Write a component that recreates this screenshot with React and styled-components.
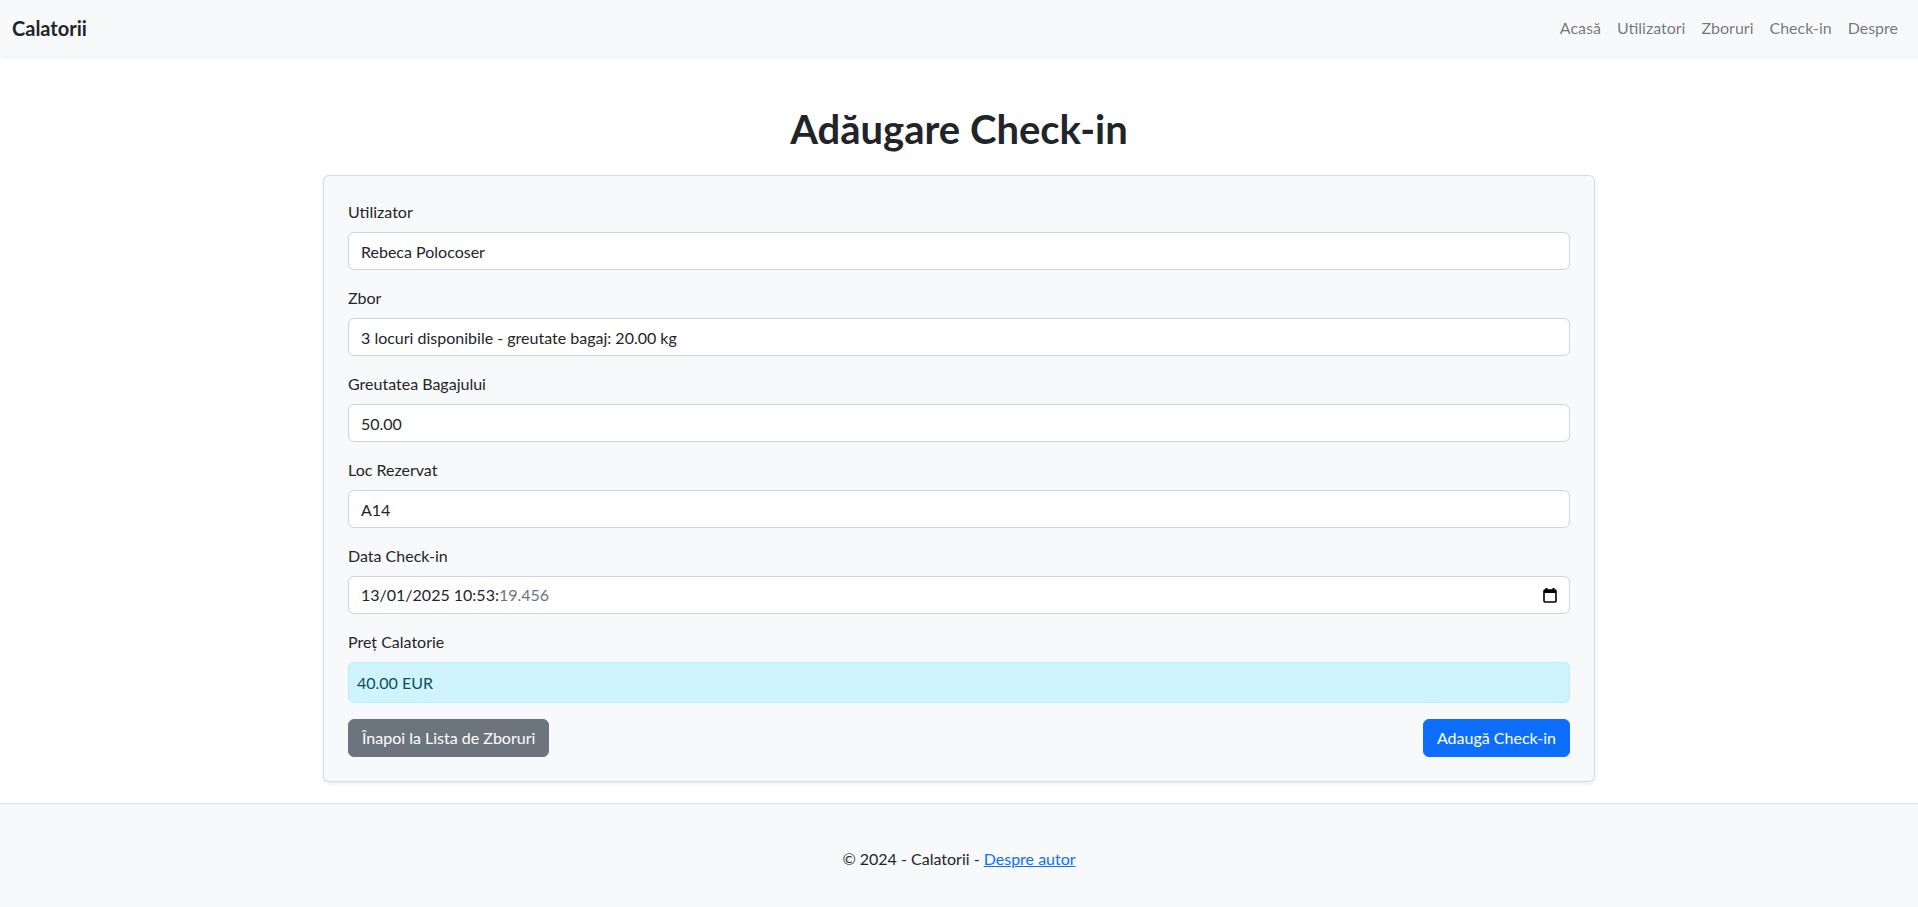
import styled, { createGlobalStyle } from 'styled-components';

const GlobalStyle = createGlobalStyle`
  * { box-sizing: border-box; }
  body {
    margin: 0;
    font-family: Lato, "Noto Sans", "Liberation Sans", sans-serif;
    font-size: 16px;
    line-height: 1.5;
    color: #212529;
    background: #fff;
  }
`;

const Page = styled.div`
  min-height: 100vh;
  display: flex;
  flex-direction: column;
`;

const Navbar = styled.nav`
  height: 56px;
  padding: 0 12px;
  display: flex;
  align-items: center;
  justify-content: space-between;
  background: #f8f9fa;
  box-shadow: 0 2px 4px rgba(0, 0, 0, 0.06);
  position: relative;
  z-index: 1;
`;

const Brand = styled.a`
  font-size: 20px;
  font-weight: 700;
  color: #212529;
  text-decoration: none;
`;

const NavList = styled.div`
  display: flex;
`;

const NavLink = styled.a`
  padding: 8px;
  color: rgba(0, 0, 0, 0.55);
  text-decoration: none;
`;

const Main = styled.main`
  flex: 1;
  padding: 49px 0 20px;
`;

const Title = styled.h1`
  margin: 0 0 22px;
  font-size: 40px;
  font-weight: 700;
  line-height: 1.2;
  text-align: center;
  color: #212529;
`;

const Card = styled.form`
  max-width: 1272px;
  margin: 0 auto;
  padding: 24px;
  background: #f8f9fa;
  border: 1px solid rgba(0, 0, 0, 0.12);
  border-radius: 6px;
  box-shadow: 0 2px 4px rgba(0, 0, 0, 0.075);
`;

const Group = styled.div`
  margin-bottom: 16px;
`;

const Label = styled.label`
  display: block;
  margin-bottom: 8px;
`;

const Input = styled.input`
  display: block;
  width: 100%;
  height: 38px;
  padding: 6px 12px;
  font: inherit;
  color: #212529;
  background: #fff;
  border: 1px solid #ced4da;
  border-radius: 6px;
  outline: none;
`;

const DateBox = styled.div`
  display: flex;
  align-items: center;
  justify-content: space-between;
  height: 38px;
  padding: 6px 12px;
  background: #fff;
  border: 1px solid #ced4da;
  border-radius: 6px;
`;

const Muted = styled.span`
  color: #6c757d;
`;

const InfoBox = styled.div`
  padding: 8px;
  line-height: 23px;
  color: #055160;
  background: #cff4fc;
  border: 1px solid #b6effb;
  border-radius: 6px;
`;

const Actions = styled.div`
  display: flex;
  justify-content: space-between;
`;

const Button = styled.button`
  height: 38px;
  padding: 6px 13px;
  font: inherit;
  color: #fff;
  background: ${p => (p.$primary ? '#0d6efd' : '#6c757d')};
  border: 1px solid ${p => (p.$primary ? '#0d6efd' : '#6c757d')};
  border-radius: 6px;
  cursor: pointer;
`;

const Footer = styled.footer`
  padding: 43px 0 36px;
  text-align: center;
  background: #f8f9fa;
  border-top: 1px solid #dee2e6;
`;

const FooterLink = styled.a`
  color: #0d6efd;
  text-decoration: underline;
`;

const CalendarIcon = () => (
  <svg width="14" height="15" viewBox="0 0 14 15">
    <rect x="2.5" y="0" width="2" height="3" fill="#000" />
    <rect x="9.5" y="0" width="2" height="3" fill="#000" />
    <rect x="1" y="2" width="12" height="12" rx="1" fill="none" stroke="#000" strokeWidth="1.6" />
    <rect x="1" y="2" width="12" height="3" fill="#000" />
  </svg>
);

const fields = [
  { label: 'Utilizator', value: 'Rebeca Polocoser' },
  { label: 'Zbor', value: '3 locuri disponibile - greutate bagaj: 20.00 kg' },
  { label: 'Greutatea Bagajului', value: '50.00' },
  { label: 'Loc Rezervat', value: 'A14' },
];

const App = () => {
  return (
    <Page>
      <GlobalStyle />
      <Navbar>
        <Brand href="#">Calatorii</Brand>
        <NavList>
          <NavLink href="#">Acasă</NavLink>
          <NavLink href="#">Utilizatori</NavLink>
          <NavLink href="#">Zboruri</NavLink>
          <NavLink href="#">Check-in</NavLink>
          <NavLink href="#">Despre</NavLink>
        </NavList>
      </Navbar>

      <Main>
        <Title>Adăugare Check-in</Title>
        <Card onSubmit={e => e.preventDefault()}>
          {fields.map(f => (
            <Group key={f.label}>
              <Label>{f.label}</Label>
              <Input defaultValue={f.value} readOnly />
            </Group>
          ))}
          <Group>
            <Label>Data Check-in</Label>
            <DateBox>
              <span>13/01/2025 10:53:<Muted>19.456</Muted></span>
              <CalendarIcon />
            </DateBox>
          </Group>
          <Group>
            <Label>Preț Calatorie</Label>
            <InfoBox>40.00 EUR</InfoBox>
          </Group>
          <Actions>
            <Button type="button">Înapoi la Lista de Zboruri</Button>
            <Button type="submit" $primary>Adaugă Check-in</Button>
          </Actions>
        </Card>
      </Main>

      <Footer>
        © 2024 - Calatorii - <FooterLink href="#">Despre autor</FooterLink>
      </Footer>
    </Page>
  );
};

export default App;
